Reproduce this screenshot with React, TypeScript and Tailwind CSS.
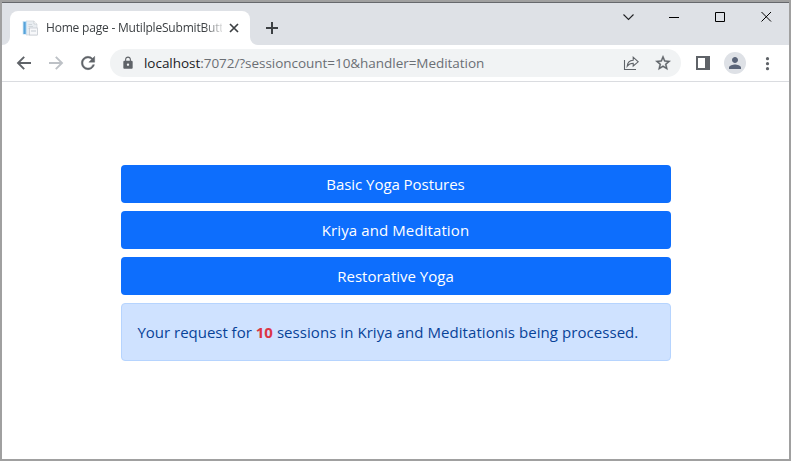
import clsx from "clsx";
import { MdLock, MdPerson } from "react-icons/md";

function Favicon() {
  return (
    <svg className="ml-3 size-4 shrink-0" viewBox="0 0 16 16">
      <path d="M4 1H12L15 4V15H4Z" fill="#e9edf1" stroke="#d2d6da" strokeWidth="0.7" />
      <path d="M12 1V4H15" fill="#fff" stroke="#c3c8cd" strokeWidth="0.7" />
      <rect x="0.7" y="1" width="4.3" height="13.5" fill="#c5e0f3" />
      <rect x="1.5" y="2" width="2.2" height="12" fill="#56a3da" />
      <path d="M6.5 4.5H10M6.5 6.5H11M6.5 8.5H8" stroke="#c9cfd5" strokeWidth="0.8" />
      <rect x="7.5" y="8" width="8" height="7" fill="#f7f8fa" stroke="#c0c6cd" strokeWidth="0.7" />
      <path d="M9 11H14" stroke="#c3cad1" />
    </svg>
  );
}

function TabStrip() {
  return (
    <div className="flex h-[42px] items-end bg-[#dee1e6]">
      <svg className="size-2 shrink-0" viewBox="0 0 8 8">
        <path d="M8 0V8H0A8 8 0 0 0 8 0Z" fill="#fff" />
      </svg>
      <div className="flex h-[34px] w-[240px] items-center rounded-t-lg bg-white">
        <Favicon />
        <div className="ml-2 w-[176px] text-[12px] leading-[18px] tracking-[-0.2px] whitespace-nowrap text-[#3c4043] [mask-image:linear-gradient(to_right,#000_158px,transparent_180px)]">
          Home page - MutilpleSubmitButt
        </div>
        <svg className="ml-[7px] size-2.5" viewBox="0 0 10 10">
          <path d="M1 1L9 9M9 1L1 9" stroke="#3c4043" strokeWidth="1.7" />
        </svg>
      </div>
      <svg className="size-2 shrink-0" viewBox="0 0 8 8">
        <path d="M0 0V8H8A8 8 0 0 1 0 0Z" fill="#fff" />
      </svg>
      <svg className="mb-[11px] ml-2 size-3" viewBox="0 0 12 12">
        <path d="M6 0V12M0 6H12" stroke="#3c4043" strokeWidth="2" />
      </svg>
      <div className="mr-[17px] mb-[23px] ml-auto flex gap-[35px]">
        <svg className="size-[11px]" viewBox="0 0 11 11">
          <path d="M0.5 3.5L5.5 8.5L10.5 3.5" fill="none" stroke="#202124" strokeWidth="1.1" />
        </svg>
        <svg className="size-[11px]" viewBox="0 0 11 11">
          <path d="M0 6.5H10" stroke="#000" />
        </svg>
        <svg className="size-[11px]" viewBox="0 0 11 11">
          <path d="M0.5 1.5H9.5V10.5H0.5Z" fill="none" stroke="#000" />
        </svg>
        <svg className="size-[11px]" viewBox="0 0 11 11">
          <path d="M0.5 1L10 10.5M10 1L0.5 10.5" stroke="#000" />
        </svg>
      </div>
    </div>
  );
}

function Arrow({ className }: { className?: string }) {
  return (
    <svg className={clsx("ml-3 size-5", className)} viewBox="0 0 20 20" fill="none" stroke="currentColor" strokeWidth="1.9">
      <path d="M17 10H4.5M10.2 3.8L4 10L10.2 16.2" />
    </svg>
  );
}

function Toolbar() {
  return (
    <div className="flex h-[37px] items-center border-b border-[#dadce0] bg-white text-[#5f6368]">
      <Arrow />
      <Arrow className="rotate-180 text-[#bdc1c6]" />
      <svg className="ml-3 size-5" viewBox="0 0 24 24" fill="currentColor" stroke="currentColor" strokeWidth="0.5">
        <path d="M17.65 6.35A7.958 7.958 0 0 0 12 4c-4.42 0-7.99 3.58-7.99 8s3.57 8 7.99 8c3.73 0 6.84-2.55 7.73-6h-2.08A5.99 5.99 0 0 1 12 18c-3.31 0-6-2.69-6-6s2.69-6 6-6c1.66 0 3.14.69 4.22 1.78L13 11h7V4l-2.35 2.35z" />
      </svg>
      <div className="ml-3 flex h-7 w-[571px] items-center rounded-full bg-[#f1f3f4]">
        <MdLock className="mb-px ml-[11px] size-[14px]" />
        <span className="ml-[9px] text-[13.5px] leading-5 tracking-[-0.04px] whitespace-nowrap text-[#6b6f74]">
          <span className="text-[#202124]">localhost</span>:7072/?sessioncount=10&amp;handler=Meditation
        </span>
        <svg className="mr-[15px] ml-auto size-4" viewBox="0 0 16 16" fill="none" stroke="#5f6368" strokeWidth="1.1">
          <path d="M1.5 5V14.5H13M4.2 11.2C4.5 7.5 6.6 5.4 10.2 5.2V2.2L15.2 6.8L10.2 11V8.2C7.4 8.2 5.6 9.2 4.2 11.2Z" />
        </svg>
        <svg className="mr-[9px] size-[18px]" viewBox="0 0 24 24" fill="currentColor" stroke="currentColor" strokeWidth="0.5">
          <path d="M22 9.24l-7.19-.62L12 2 9.19 8.63 2 9.24l5.46 4.73L5.82 21 12 17.27 18.18 21l-1.63-7.03L22 9.24zM12 15.4l-3.76 2.27 1-4.28-3.32-2.88 4.38-.38L12 6.1l1.71 4.04 4.38.38-3.32 2.88 1 4.28L12 15.4z" />
        </svg>
      </div>
      <svg className="ml-[15px] size-3.5" viewBox="0 0 14 14">
        <path d="M0 0H14V14H0ZM2 2V12H9V2Z" fill="#5f6368" fillRule="evenodd" />
      </svg>
      <div className="ml-3.5 flex size-[22px] items-center justify-center rounded-full bg-[#dee1e6] text-[#5a6478]">
        <MdPerson className="size-[18px]" />
      </div>
      <svg className="ml-[18px] h-[15px] w-[6px]" viewBox="0 0 6 15" fill="#5f6368">
        <circle cx="3.5" cy="2.7" r="1.6" />
        <circle cx="3.5" cy="7.7" r="1.6" />
        <circle cx="3.5" cy="12.7" r="1.6" />
      </svg>
    </div>
  );
}

function YogaButton({ label, tracking }: { label: string; tracking: string }) {
  return (
    <button className={clsx("h-[38px] w-full rounded-[4px] bg-[#0d6efd] text-[15px] leading-6 text-white", tracking)}>
      {label}
    </button>
  );
}

export default function App() {
  return (
    <div className="h-[461px] w-[791px] overflow-hidden border-2 border-[#a0a0a0] bg-white font-['Open_Sans','Noto_Sans',sans-serif]">
      <div className="h-px bg-[#66686c]" />
      <TabStrip />
      <Toolbar />
      <main className="mx-auto mt-[83px] flex w-[550px] flex-col gap-2">
        <YogaButton label="Basic Yoga Postures" tracking="tracking-[-0.05px]" />
        <YogaButton label="Kriya and Meditation" tracking="tracking-[0.1px]" />
        <YogaButton label="Restorative Yoga" tracking="tracking-[0px]" />
        <div className="flex h-[58px] items-center rounded-[4px] border border-[#b6d4fe] bg-[#cfe2ff] px-4 text-[15px] leading-6 tracking-[0.06px] whitespace-pre text-[#084298]">
          <p>
            <span className="tracking-[-0.02px]">Your request for </span>
            <b className="font-bold text-[#dc3545]">10</b> sessions in Kriya and Meditationis being processed.
          </p>
        </div>
      </main>
    </div>
  );
}
